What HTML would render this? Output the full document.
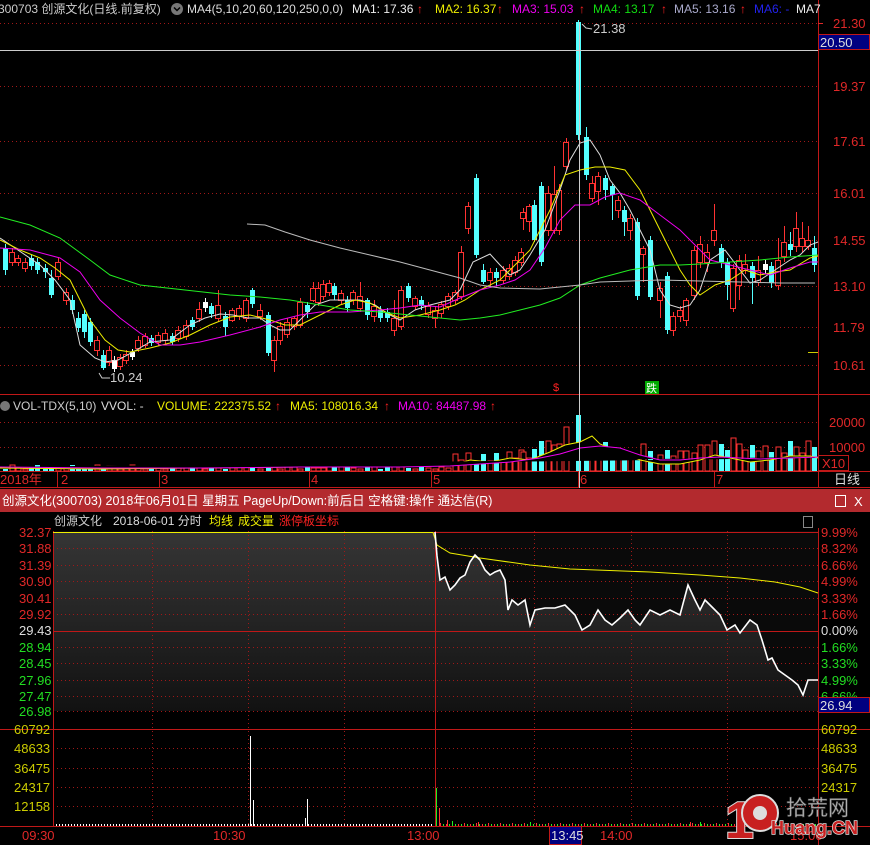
<!DOCTYPE html>
<html><head><meta charset="utf-8">
<style>
html,body{margin:0;padding:0;background:#000;}
body{width:870px;height:845px;overflow:hidden;position:relative;font-family:"Liberation Sans","Noto Sans CJK SC",sans-serif;font-size:12px;}
svg{position:absolute;left:0;top:0;font-size:12px;font-family:"Liberation Sans","Noto Sans CJK SC",sans-serif;}
</style></head><body>
<svg id="s" width="870" height="845" viewBox="0 0 870 845">
<defs>
<linearGradient id="g1" x1="0" y1="0" x2="0" y2="1"><stop offset="0" stop-color="#353535"/><stop offset="1" stop-color="#121212"/></linearGradient>
</defs>
<rect width="870" height="845" fill="#000"/>
<g stroke="#a01818" stroke-dasharray="1,3" stroke-width="1">
<line x1="0" y1="23.5" x2="818" y2="23.5"/><line x1="0" y1="86.5" x2="818" y2="86.5"/><line x1="0" y1="141.5" x2="818" y2="141.5"/><line x1="0" y1="193.5" x2="818" y2="193.5"/><line x1="0" y1="240.5" x2="818" y2="240.5"/><line x1="0" y1="286.5" x2="818" y2="286.5"/><line x1="0" y1="327.5" x2="818" y2="327.5"/><line x1="0" y1="365.5" x2="818" y2="365.5"/>
<line x1="0" y1="422.5" x2="818" y2="422.5"/><line x1="0" y1="447.5" x2="818" y2="447.5"/>
</g>
<line x1="818.5" y1="0" x2="818.5" y2="488" stroke="#c01818"/>
<line x1="0" y1="394.5" x2="870" y2="394.5" stroke="#c01818"/>
<line x1="0" y1="471.5" x2="870" y2="471.5" stroke="#c01818"/>
<line x1="0" y1="487.5" x2="870" y2="487.5" stroke="#c01818"/>
<g id="candles"></g>
<g id="mas" fill="none" stroke-width="1"></g>
<g id="vols"></g>
<line x1="0" y1="50.5" x2="818" y2="50.5" stroke="#ccc"/>
<line x1="579.5" y1="22" x2="579.5" y2="488" stroke="#ccc"/>
<text x="-2" y="13" fill="#ccc">300703 创源文化(日线.前复权)</text>
<circle cx="177" cy="9" r="6" fill="#777"/><path d="M174 7.5l3 3 3-3" stroke="#000" stroke-width="1.5" fill="none"/>
<text x="187" y="13" fill="#ddd">MA4(5,10,20,60,120,250,0,0)</text>
<text x="352" y="13" fill="#eee">MA1: 17.36</text><text x="417" y="13" fill="#f22">↑</text>
<text x="435" y="13" fill="#ee0">MA2: 16.37</text><text x="497" y="13" fill="#f22">↑</text>
<text x="512" y="13" fill="#e0e">MA3: 15.03</text><text x="579" y="13" fill="#f22">↑</text>
<text x="593" y="13" fill="#1d1">MA4: 13.17</text><text x="661" y="13" fill="#f22">↑</text>
<text x="674" y="13" fill="#aac">MA5: 13.16</text><text x="740" y="13" fill="#f22">↑</text>
<text x="754" y="13" fill="#22e">MA6: -</text>
<text x="796" y="13" fill="#eee">MA7</text>
<text x="593" y="33" fill="#ccc" font-size="13">21.38</text>
<path d="M582 24l4 4 6 1" stroke="#ccc" fill="none"/>
<text x="110" y="382" fill="#ccc" font-size="13">10.24</text>
<path d="M99 373l3 5 8 0" stroke="#ccc" fill="none"/>
<text x="553" y="391" fill="#f22" font-size="11">$</text>
<rect x="645" y="381" width="14" height="13" fill="#0a0"/><text x="646" y="392" fill="#fff" font-size="11">跌</text>
<g fill="#e02828" font-size="13">
<line x1="818" y1="23.5" x2="823" y2="23.5" stroke="#e02828"/>
<text x="833" y="28">21.30</text><text x="833" y="91">19.37</text><text x="833" y="146">17.61</text><text x="833" y="198">16.01</text><text x="833" y="245">14.55</text><text x="833" y="291">13.10</text><text x="833" y="332">11.79</text><text x="833" y="370">10.61</text>
<text x="829" y="427">20000</text><text x="829" y="452">10000</text>
</g>
<rect x="818.5" y="34.5" width="51" height="15" fill="#000080" stroke="#c01818"/>
<text x="820" y="47" fill="#ddd" font-size="13">20.50</text>
<rect x="818.5" y="455.5" width="30" height="15" fill="#000" stroke="#c01818"/>
<text x="822" y="468" fill="#e02828" font-size="13">X10</text>
<line x1="808" y1="352.5" x2="818" y2="352.5" stroke="#cc0"/>
<circle cx="5" cy="406" r="5" fill="#777"/>
<text x="13" y="410" fill="#ccc">VOL-TDX(5,10)</text><text x="101" y="410" fill="#ddd">VVOL: -</text>
<text x="157" y="410" fill="#ee0">VOLUME: 222375.52</text><text x="275" y="410" fill="#f22">↑</text>
<text x="290" y="410" fill="#ee0">MA5: 108016.34</text><text x="384" y="410" fill="#f22">↑</text>
<text x="398" y="410" fill="#e0e">MA10: 84487.98</text><text x="490" y="410" fill="#f22">↑</text>
<g fill="#e02828" font-size="13">
<text x="0" y="484">2018年</text><text x="61" y="484">2</text><text x="161" y="484">3</text><text x="311" y="484">4</text><text x="433" y="484">5</text><text x="580" y="484">6</text><text x="716" y="484">7</text>
</g>
<g stroke="#c01818"><line x1="57.5" y1="472" x2="57.5" y2="487"/><line x1="159.5" y1="472" x2="159.5" y2="487"/><line x1="309.5" y1="472" x2="309.5" y2="487"/><line x1="431.5" y1="472" x2="431.5" y2="487"/><line x1="578.5" y1="472" x2="578.5" y2="487"/><line x1="714.5" y1="472" x2="714.5" y2="487"/></g>
<text x="834" y="484" fill="#ddd" font-size="13">日线</text>
<rect x="0" y="489" width="870" height="23" fill="#b32a2e"/>
<text x="2" y="505" fill="#fff" font-size="12.5">创源文化(300703) 2018年06月01日 星期五 PageUp/Down:前后日 空格键:操作 通达信(R)</text>
<rect x="835.5" y="495.5" width="10" height="11" fill="none" stroke="#fff"/>
<text x="854" y="506" fill="#fff" font-size="13">X</text>
<rect x="53" y="531" width="765" height="180" fill="#0a0a0a"/>
<path id="fill" fill="url(#g1)"/>
<g stroke="#a01818" stroke-dasharray="1,3">
<line x1="53" y1="548.5" x2="818" y2="548.5"/><line x1="53" y1="565.5" x2="818" y2="565.5"/><line x1="53" y1="581.5" x2="818" y2="581.5"/><line x1="53" y1="598.5" x2="818" y2="598.5"/><line x1="53" y1="614.5" x2="818" y2="614.5"/><line x1="53" y1="647.5" x2="818" y2="647.5"/><line x1="53" y1="663.5" x2="818" y2="663.5"/><line x1="53" y1="680.5" x2="818" y2="680.5"/><line x1="53" y1="696.5" x2="818" y2="696.5"/><line x1="53" y1="711.5" x2="818" y2="711.5"/>
<line x1="53" y1="748.5" x2="818" y2="748.5"/><line x1="53" y1="768.5" x2="818" y2="768.5"/><line x1="53" y1="787.5" x2="818" y2="787.5"/><line x1="53" y1="806.5" x2="818" y2="806.5"/>
<line x1="152.5" y1="531" x2="152.5" y2="826"/><line x1="248.5" y1="531" x2="248.5" y2="826"/><line x1="344.5" y1="531" x2="344.5" y2="826"/><line x1="534.5" y1="531" x2="534.5" y2="826"/><line x1="631.5" y1="531" x2="631.5" y2="826"/><line x1="727.5" y1="531" x2="727.5" y2="826"/>
</g>
<g stroke="#c01818">
<line x1="53" y1="532.5" x2="818" y2="532.5"/><line x1="53" y1="631.5" x2="818" y2="631.5"/><line x1="0" y1="729.5" x2="870" y2="729.5"/><line x1="0" y1="826.5" x2="870" y2="826.5"/>
<line x1="435.5" y1="531" x2="435.5" y2="826"/><line x1="818.5" y1="528" x2="818.5" y2="845"/><line x1="53.5" y1="531" x2="53.5" y2="826"/>
</g>
<polyline fill="none" stroke="#ee0" points="53,532.5 433,532.5 437,545 450,553 480,558 530,565 570,569 650,572 700,575 740,578 775,582 800,587 818,593"/>
<polyline id="pl" fill="none" stroke="#fff" stroke-width="1.6"/>
<text x="54" y="525" fill="#ccc">创源文化</text><text x="113" y="525" fill="#ddd">2018-06-01 分时</text>
<text x="209" y="525" fill="#ee0">均线</text><text x="238" y="525" fill="#ee0">成交量</text><text x="279" y="525" fill="#f22">涨停板坐标</text>
<rect x="803.5" y="516.5" width="9" height="11" fill="none" stroke="#888"/>
<g font-size="13">
<g fill="#e02828"><text x="19" y="537">32.37</text><text x="19" y="553">31.88</text><text x="19" y="570">31.39</text><text x="19" y="586">30.90</text><text x="19" y="603">30.41</text><text x="19" y="619">29.92</text></g>
<text x="19" y="635" fill="#ddd">29.43</text>
<g fill="#22dd22"><text x="19" y="652">28.94</text><text x="19" y="668">28.45</text><text x="19" y="685">27.96</text><text x="19" y="701">27.47</text><text x="19" y="716">26.98</text></g>
<g fill="#cc0"><text x="14" y="734">60792</text><text x="14" y="753">48633</text><text x="14" y="773">36475</text><text x="14" y="792">24317</text><text x="14" y="811">12158</text></g>
<g fill="#e02828"><text x="821" y="537">9.99%</text><text x="821" y="553">8.32%</text><text x="821" y="570">6.66%</text><text x="821" y="586">4.99%</text><text x="821" y="603">3.33%</text><text x="821" y="619">1.66%</text></g>
<text x="821" y="635" fill="#ddd">0.00%</text>
<g fill="#22dd22"><text x="821" y="652">1.66%</text><text x="821" y="668">3.33%</text><text x="821" y="685">4.99%</text><text x="821" y="701">6.66%</text></g>
<g fill="#cc0"><text x="821" y="734">60792</text><text x="821" y="753">48633</text><text x="821" y="773">36475</text><text x="821" y="792">24317</text></g>
</g>
<rect x="818.5" y="697.5" width="51" height="15" fill="#000080" stroke="#c01818"/>
<text x="820" y="710" fill="#ddd" font-size="13">26.94</text>
<g id="ivol"></g>
<g fill="#e02828" font-size="13"><text x="22" y="840">09:30</text><text x="213" y="840">10:30</text><text x="407" y="840">13:00</text><text x="600" y="840">14:00</text><text x="790" y="840">15:00</text></g>
<rect x="549.5" y="826.5" width="32" height="18" fill="#000080" stroke="#c01818"/>
<text x="551" y="840" fill="#ddd" font-size="13">13:45</text>
<g>
<text x="725" y="838" fill="#c82020" stroke="#ddd" stroke-width="2" font-size="52" font-weight="bold" paint-order="stroke">1</text>
<circle cx="760" cy="813" r="18" fill="#c82020" stroke="#ddd" stroke-width="2"/>
<circle cx="760" cy="813" r="7" fill="#ddd"/>
<text x="786" y="815" fill="#bbb" stroke="#555" stroke-width="0.6" font-size="21">拾荒网</text>
<text x="771" y="834" fill="#c82020" stroke="#ddd" stroke-width="1.5" paint-order="stroke" font-size="18" font-weight="bold">Huang.CN</text>
</g>
</svg>
<script>
var NS="http://www.w3.org/2000/svg";
function el(p,t,a){var e=document.createElementNS(NS,t);for(var k in a)e.setAttribute(k,a[k]);document.getElementById(p).appendChild(e);return e;}
var C=[[5,248,270,'c',244,275],[12,252,262,'r',248,266],[18,258,262,'r',255,266],[25,262,268,'r',258,272],[31,258,266,'c',255,270],[37,262,270,'c',258,274],[45,268,272,'c',264,278],[51,278,295,'c',270,298],[58,262,276,'r',258,280],[66,292,300,'r',288,305],[72,300,310,'c',295,314],[78,318,328,'c',312,332],[84,314,332,'c',310,338],[90,322,342,'c',318,346],[97,340,350,'r',336,356],[103,355,368,'c',350,370],[109,350,362,'r',346,366],[114,360,369,'w',356,372],[120,357,366,'r',354,370],[126,354,360,'r',350,364],[132,352,357,'w',349,360],[138,340,348,'r',336,352],[145,336,345,'r',333,348],[151,338,343,'c',335,346],[158,335,342,'r',332,346],[165,333,340,'r',329,344],[172,336,342,'c',333,345],[178,330,338,'r',326,342],[186,325,336,'r',320,340],[192,320,327,'c',317,330],[199,309,318,'r',302,322],[205,302,308,'w',298,312],[211,306,314,'c',303,318],[218,305,318,'r',290,322],[225,316,327,'c',312,336],[232,310,320,'r',308,322],[239,308,316,'r',305,320],[246,300,318,'r',298,322],[252,290,304,'c',288,308],[260,310,316,'r',304,320],[268,315,353,'c',312,356],[274,340,360,'r',336,372],[280,326,340,'r',322,345],[287,322,334,'r',318,338],[294,318,326,'r',316,330],[300,302,325,'r',298,328],[307,305,312,'c',302,318],[313,288,300,'r',282,302],[318,288,302,'r',282,306],[323,284,296,'r',280,300],[329,283,292,'r',280,296],[334,286,295,'c',283,300],[341,293,300,'r',290,304],[347,300,308,'c',296,312],[353,292,300,'r',290,305],[360,296,308,'r',282,312],[367,300,315,'c',298,320],[374,306,316,'r',300,322],[380,310,318,'c',306,322],[387,312,318,'c',308,322],[394,318,330,'r',300,336],[401,290,326,'r',286,330],[408,286,298,'c',283,302],[415,298,306,'r',296,310],[421,300,306,'c',296,310],[428,306,314,'r',302,318],[435,310,318,'r',306,328],[441,304,313,'r',301,318],[448,296,306,'r',293,310],[455,292,300,'r',290,304],[461,252,296,'r',246,300],[468,206,228,'r',202,234],[476,178,255,'c',174,258],[483,270,282,'c',264,284],[490,272,280,'r',268,286],[496,272,278,'c',268,286],[503,270,280,'r',266,284],[509,268,276,'r',264,280],[515,260,272,'r',256,276],[521,252,262,'r',248,266],[523,212,218,'r',208,230],[529,206,221,'r',204,232],[534,205,240,'c',200,242],[541,186,262,'c',182,266],[548,193,230,'r',186,236],[554,194,230,'r',166,234],[559,190,230,'r',184,235],[566,142,166,'r',138,170],[578,22,135,'c',20,140],[586,137,175,'c',127,180],[592,183,198,'r',176,202],[598,176,191,'r',172,205],[605,178,190,'c',175,200],[612,186,195,'c',184,220],[618,200,210,'r',196,218],[624,210,222,'c',206,236],[630,218,230,'r',214,240],[637,222,296,'c',218,300],[643,254,248,'r',246,282],[650,240,297,'c',236,300],[660,288,300,'r',282,318],[667,276,330,'c',272,334],[673,316,330,'r',312,336],[680,310,316,'r',306,322],[686,300,320,'r',298,326],[694,250,295,'r',246,300],[700,244,262,'r',236,268],[707,252,262,'r',244,272],[714,230,240,'r',204,246],[721,248,262,'c',244,268],[727,262,285,'c',258,300],[733,268,308,'r',264,312],[739,260,285,'r',255,300],[745,264,270,'r',254,274],[752,266,278,'c',262,304],[758,270,282,'r',256,286],[765,264,270,'w',260,274],[771,266,283,'c',262,288],[778,260,285,'r',238,290],[784,242,256,'r',226,262],[790,244,250,'c',232,256],[796,228,246,'r',212,252],[802,238,246,'r',222,252],[808,240,246,'r',226,250],[814,248,265,'c',236,272]];
C.forEach(function(c){var x=c[0],col=c[3]=='c'?'#54ffff':(c[3]=='w'?'#fff':'#ff3232');
 var t=Math.min(c[1],c[2]),b=Math.max(c[1],c[2]);
 el('candles','line',{x1:x+0.5,x2:x+0.5,y1:c[4],y2:c[5],stroke:col});
 if(c[3]=='r')el('candles','rect',{x:x-2.5,y:t+0.5,width:5,height:Math.max(b-t,1),fill:'#000',stroke:col});
 else el('candles','rect',{x:x-2,y:t,width:5,height:Math.max(b-t,1.5),fill:col});
 var h;
 if(x<455)h=2+((x*7)%5);
 else if(x<540)h=10+((x*13)%14);
 else h=16+((x*11)%18);
 if(x==566)h=44;if(x==578)h=56;if(x==548||x==541)h=30;if(x==592)h=26;if(x==598)h=24;if(x==604)h=22;
 if(x==700||x==707)h=26;if(x==714)h=30;if(x==796)h=24;if(x>610&&x<690&&h>20)h=h-6;
 el('vols','rect',{x:x-2,y:471-h,width:5,height:h,fill:c[3]=='c'?'#54ffff':'#000',stroke:c[3]=='c'?'none':'#ff3232'});
});
function pl(g,col,pts){el(g,'polyline',{points:pts,stroke:col});}
pl('mas','#ddd','0,238 15,248 40,265 55,280 70,300 80,345 95,358 105,362 118,360 133,352 150,342 170,340 190,325 205,318 220,314 233,315 248,318 260,318 270,325 280,330 290,330 300,320 315,305 330,300 345,300 360,300 375,305 390,315 400,320 415,310 430,305 450,300 460,290 473,262 490,254 500,265 510,275 520,270 530,255 545,230 560,190 570,160 580,143 590,140 600,155 610,180 620,193 630,210 640,230 650,250 660,290 670,305 680,308 690,305 700,290 710,260 725,250 740,270 750,283 760,280 775,270 790,260 800,255 810,245 818,242');
pl('mas','#ee0','0,240 20,250 40,258 55,268 70,280 80,300 90,320 105,340 118,350 130,352 150,348 170,343 190,335 210,325 230,317 250,315 270,320 285,325 300,325 320,315 340,305 355,300 370,303 385,312 400,318 420,315 440,310 455,305 465,300 480,290 500,280 510,270 530,250 550,210 565,175 580,170 595,167 610,167 625,170 640,190 655,220 670,250 680,270 690,285 700,295 715,285 730,280 745,270 760,275 775,272 790,270 810,258 818,256');
pl('mas','#e0e','0,248 30,250 60,258 80,272 100,300 120,318 140,333 160,345 180,345 200,342 230,335 260,327 280,320 300,315 320,312 350,312 380,310 400,308 420,305 440,307 460,298 480,290 500,285 515,280 530,270 545,248 560,220 575,205 590,205 605,197 620,193 640,200 660,215 680,230 695,245 710,260 730,265 750,270 770,275 790,268 810,262 818,262');
pl('mas','#2e2','0,217 30,225 60,238 90,260 110,275 140,285 185,290 230,295 260,297 290,300 320,305 350,310 380,312 410,315 440,318 460,320 480,318 500,315 520,310 540,305 560,298 580,285 600,278 630,270 660,265 680,265 700,264 730,262 760,260 790,257 818,255');
pl('mas','#bbb','247,224 265,225 285,232 310,240 340,248 370,255 400,262 430,270 460,278 480,285 500,288 540,289 580,285 600,282 630,281 660,280 700,281 740,282 780,283 815,283');
pl('vols','#ee0','0,468 100,469 200,468 300,467 400,466 450,466 470,460 490,462 510,458 530,460 550,452 565,445 580,442 592,436 600,444 620,452 640,460 660,464 680,464 700,460 715,455 730,458 750,462 770,460 790,456 810,456 818,458');
pl('vols','#e0e','0,467 100,468 200,468 300,467 400,467 450,466 480,464 510,462 540,458 560,454 580,448 600,446 620,448 640,455 660,460 680,460 700,458 720,457 740,458 760,459 790,458 818,457');
var P='435,532 437,556 440,580 445,577 450,590 455,585 460,578 465,575 470,562 475,555 480,560 485,570 490,575 495,572 500,570 505,580 508,610 512,600 518,605 525,600 530,625 535,610 545,608 555,608 565,605 575,615 582,630 590,625 598,610 605,620 612,625 620,618 628,610 635,620 640,625 650,610 660,615 670,610 680,615 688,585 695,600 700,610 705,600 710,605 715,610 720,615 727,630 735,625 740,633 750,620 757,625 762,640 768,660 772,658 778,670 785,675 792,680 798,685 803,695 808,680 813,680 818,680';
document.getElementById('pl').setAttribute('points',P);
document.getElementById('fill').setAttribute('d','M53,532 L'+P.replace(/ /g,' L')+' L818,711 L53,711 Z');
var iv=[[250,736,'#fff'],[253,800,'#fff'],[307,799,'#fff'],[305,818,'#fff'],[436,788,'#2e2'],[439,808,'#f33'],[447,820,'#f33'],[452,821,'#2e2'],[478,822,'#f33'],[530,822,'#2e2'],[690,822,'#f33'],[700,822,'#2e2']];
for(var x=56;x<432;x+=3)el('ivol','line',{x1:x+0.5,x2:x+0.5,y1:824,y2:826,stroke:'#fff'});
for(var x=440;x<818;x+=3)el('ivol','line',{x1:x+0.5,x2:x+0.5,y1:823+(x%4?1:0),y2:826,stroke:(x%2?'#2e2':'#f33')});
iv.forEach(function(v){el('ivol','line',{x1:v[0]+0.5,x2:v[0]+0.5,y1:v[1],y2:826,stroke:v[2]});});
</script>
</body></html>
